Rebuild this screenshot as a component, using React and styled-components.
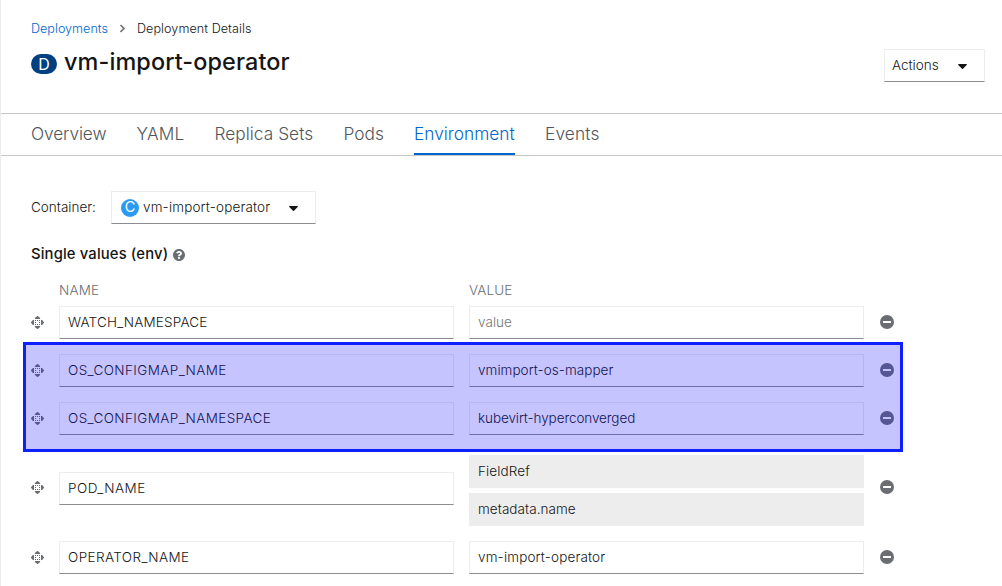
import React from 'react';
import styled, { createGlobalStyle } from 'styled-components';

const GlobalStyle = createGlobalStyle`
  *, *::before, *::after { box-sizing: border-box; }
  body {
    margin: 0;
    background: #fff;
    color: #151515;
    font-family: Inter, 'Liberation Sans', sans-serif;
    font-size: 13.5px;
    font-weight: 360;
    line-height: 21px;
    overflow: hidden;
  }
`;

const Page = styled.main`
  width: 1002px;
  height: 586px;
  overflow: hidden;
  border-left: 1px solid #ededed;
  background: #fff;
`;

const Text = styled.span`
  letter-spacing: ${(p) => p.$track || 0}px;
  white-space: nowrap;
`;

const Header = styled.header`
  height: 113px;
  padding: 18px 17px 0 30px;
`;

const Breadcrumb = styled.nav`
  display: flex;
  align-items: center;
  height: 21px;
  font-size: 12.6px;
`;

const Crumb = styled(Text)`
  color: ${(p) => (p.$link ? '#06c' : '#151515')};
  width: ${(p) => (p.$link ? '88px' : 'auto')};
`;

const Chevron = styled.svg`
  display: block;
  width: 7px;
  height: 9px;
  margin-right: 11px;
`;

const TitleRow = styled.div`
  display: flex;
  justify-content: space-between;
  align-items: flex-start;
  height: 43px;
  padding-top: 10px;
`;

const Title = styled.h1`
  display: flex;
  align-items: center;
  gap: 7px;
  height: 26px;
  margin: 0;
  font-size: 23.4px;
  font-weight: 450;
`;

const TitleText = styled(Text)`
  position: relative;
  top: -1px;
`;

const Badge = styled.span`
  display: flex;
  align-items: center;
  justify-content: center;
  flex: none;
  width: ${(p) => p.$width}px;
  height: ${(p) => p.$height}px;
  margin-top: ${(p) => p.$drop || 0}px;
  border-radius: 20px;
  background: ${(p) => p.$color};
  color: #fff;
  font-size: ${(p) => p.$size}px;
  font-weight: 400;
  line-height: 1;
`;

const Dropdown = styled.button`
  display: flex;
  align-items: center;
  flex: none;
  width: ${(p) => p.$width}px;
  height: 33px;
  margin: 0;
  padding: 0 17px 0 ${(p) => p.$inset}px;
  border: 1px solid #ededed;
  border-bottom-color: #8a8d90;
  border-radius: 0;
  background: #fff;
  color: #151515;
  font: inherit;
`;

const Caret = styled.svg`
  display: block;
  width: 9px;
  height: 5px;
  margin: 2px 0 0 auto;
`;

const Tabs = styled.nav`
  display: flex;
  height: 43px;
  padding-left: 30px;
  border-top: 1px solid #c7c7c7;
  border-bottom: 1px solid #c7c7c7;
  font-size: 17.3px;
`;

const Tab = styled.a`
  flex: none;
  width: ${(p) => p.$width}px;
  height: 41px;
  margin-right: 30px;
  padding-top: 9px;
  border-bottom: 2px solid ${(p) => (p.$active ? '#06c' : 'transparent')};
  color: ${(p) => (p.$active ? '#06c' : '#51565b')};
`;

const Body = styled.section`
  padding: 35px 0 0 30px;
`;

const ContainerRow = styled.div`
  display: flex;
  align-items: center;
  height: 33px;
`;

const ContainerLabel = styled(Text)`
  width: 80px;
`;

const ContainerName = styled(Text)`
  margin-left: 4px;
`;

const SectionTitle = styled.h2`
  display: flex;
  align-items: center;
  gap: 5px;
  height: 21px;
  margin: 20px 0 0;
  font-size: 14.8px;
  font-weight: 500;
`;

const Icon = styled.svg`
  display: block;
  flex: none;
`;

const HelpIcon = styled(Icon)`
  width: 12px;
  height: 12px;
  margin-top: 1px;
`;

const Editor = styled.div`
  position: relative;
  display: flex;
  flex-direction: column;
  gap: 15px;
  width: 872px;
  margin-top: 15px;
`;

const Row = styled.div`
  display: grid;
  grid-template-columns: 13px 395px 395px 14px;
  column-gap: 15px;
  align-items: center;
`;

const HeadRow = styled(Row)`
  height: 21px;
  margin-bottom: -10px;
  color: #6a6e73;
`;

const HeadCell = styled(Text)`
  grid-column: ${(p) => p.$column};
`;

const Field = styled.input`
  display: block;
  width: 100%;
  height: 33px;
  margin: 0;
  padding: 0 8px ${(p) => (p.$low ? 0 : 2)}px;
  border: 1px solid #ededed;
  border-bottom-color: ${(p) => (p.disabled ? '#ededed' : '#8a8d90')};
  border-radius: 0;
  outline: none;
  background: ${(p) => (p.disabled ? '#ededed' : '#fff')};
  color: #151515;
  font: inherit;
  letter-spacing: ${(p) => p.$track || 0}px;
  &::placeholder { color: #757575; opacity: 1; }
`;

const FieldStack = styled.div`
  display: flex;
  flex-direction: column;
  gap: 5px;
  padding-top: ${(p) => (p.$double ? 5 : 0)}px;
`;

const Highlight = styled.div`
  position: absolute;
  left: -8px;
  top: 62px;
  width: 880px;
  height: 110px;
  border: 3px solid #0f20ff;
  background: rgba(16, 12, 255, 0.245);
  background-clip: padding-box;
  pointer-events: none;
`;

const RemoveIcon = styled(Icon)`
  width: 14px;
  height: 14px;
  margin: 0 0 ${(p) => (p.$raised ? 3 : 1)}px 1px;
`;

const MoveIcon = styled(Icon)`
  width: 13px;
  height: 13px;
  margin-bottom: ${(p) => (p.$raised ? 2 : 0)}px;
`;

const Down = () => (
  <Caret viewBox="0 0 9 5"><path d="M.7 0h7.6c.6 0 .8.6.4 1L5 4.7c-.3.3-.7.3-1 0L.3 1C-.1.6.1 0 .7 0Z" fill="#151515" /></Caret>
);

const Move = ({ raised }) => (
  <MoveIcon viewBox="0 0 13 13" fill="#6a6e73" $raised={raised}>
    <path d="M6.2 0h.6L9.100 1.900V3H3.900V1.900Z M6.200 13h.6l2.300-1.900V10H3.900v1.100Z M0 6.200v.6L1.900 9.100H3V3.900H1.900Z M13 6.200v.6l-1.900 2.300H10V3.900h1.100Z" />
    <path d="M4 4h1v1H4z M6 4h1v1H6z M8 4h1v1H8z M4 6h1v1H4z M8 6h1v1H8z M4 8h1v1H4z M6 8h1v1H6z M8 8h1v1H8z" />
  </MoveIcon>
);

const Remove = ({ raised }) => (
  <RemoveIcon viewBox="0 0 14 14" $raised={raised}>
    <circle cx="7" cy="7" r="7" fill="#6a6e73" />
    <rect x="3" y="6" width="8" height="2" rx=".3" fill="#fff" />
  </RemoveIcon>
);

const tabs = [
  { name: 'Overview', width: 75.5, track: -0.12 },
  { name: 'YAML', width: 48, track: 0.2 },
  { name: 'Replica Sets', width: 99, track: 0.03 },
  { name: 'Pods', width: 40.5, track: 0 },
  { name: 'Environment', width: 101, track: 0, active: true },
  { name: 'Events', width: 55, track: 0.15 },
];

const env = [
  { name: 'WATCH_NAMESPACE', track: 0.18, values: [{ text: '', track: 0.05 }] },
  { name: 'OS_CONFIGMAP_NAME', track: 0.4, values: [{ text: 'vmimport-os-mapper', track: 0.05 }] },
  { name: 'OS_CONFIGMAP_NAMESPACE', track: 0.4, values: [{ text: 'kubevirt-hyperconverged', track: -0.09 }] },
  { name: 'POD_NAME', track: 0.48, values: [{ text: 'FieldRef', track: 0.12 }, { text: 'metadata.name', track: 0.06 }] },
  { name: 'OPERATOR_NAME', track: 0.4, values: [{ text: 'vm-import-operator', track: 0.16 }] },
];

const EnvRow = ({ item }) => {
  const isRef = item.values.length > 1;
  return (
    <Row>
      <Move raised={isRef} />
      <Field defaultValue={item.name} $track={item.track} $low={isRef} />
      <FieldStack $double={isRef}>
        {item.values.map((v) => (
          <Field key={v.text} defaultValue={v.text} placeholder="value" disabled={isRef} $track={v.track} />
        ))}
      </FieldStack>
      <Remove raised={isRef} />
    </Row>
  );
};

export default function App() {
  return (
    <Page>
      <GlobalStyle />
      <Header>
        <Breadcrumb>
          <Crumb $link>Deployments</Crumb>
          <Chevron viewBox="0 0 7 9"><path d="m1.5 1 3.5 3.5L1.5 8" fill="none" stroke="#6a6e73" strokeWidth="1.6" /></Chevron>
          <Crumb $track={0.05}>Deployment Details</Crumb>
        </Breadcrumb>
        <TitleRow>
          <Title>
            <Badge $width={26} $height={20} $drop={4} $size={16} $color="#004080">D</Badge>
            <TitleText $track={0.12}>vm-import-operator</TitleText>
          </Title>
          <Dropdown $width={101} $inset={7}>
            <Text>Actions</Text>
            <Down />
          </Dropdown>
        </TitleRow>
      </Header>
      <Tabs>
        {tabs.map((t) => (
          <Tab key={t.name} $width={t.width} $active={t.active}><Text $track={t.track}>{t.name}</Text></Tab>
        ))}
      </Tabs>
      <Body>
        <ContainerRow>
          <ContainerLabel>Container:</ContainerLabel>
          <Dropdown $width={205} $inset={9}>
            <Badge $width={18} $height={18} $size={14.5} $color="#2b9af3">C</Badge>
            <ContainerName $track={0.16}>vm-import-operator</ContainerName>
            <Down />
          </Dropdown>
        </ContainerRow>
        <SectionTitle>
          <Text $track={0.15}>Single values (env)</Text>
          <HelpIcon viewBox="8 8 496 496" fill="#6a6e73">
            <path d="M504 256c0 137-111 248-248 248S8 393 8 256 119 8 256 8s248 111 248 248zM262.700 90c-54.500 0-89.300 23-116.500 63.800-3.500 5.300-2.400 12.400 2.700 16.300l34.700 26.300c5.200 3.900 12.600 3 16.700-2.100 17.900-22.700 30.100-35.800 57.300-35.800 20.400 0 45.700 13.100 45.700 33 0 15-12.400 22.700-32.500 34C247.100 238.500 216 255 216 296v4c0 6.600 5.400 12 12 12h56c6.600 0 12-5.400 12-12v-1.300c0-28.500 83.200-29.600 83.200-106.700 0-58-60.200-102-116.500-102zM256 338c-25.400 0-46 20.600-46 46s20.600 46 46 46 46-20.600 46-46-20.600-46-46-46z" />
          </HelpIcon>
        </SectionTitle>
        <Editor>
          <HeadRow>
            <HeadCell $column={2} $track={0.2}>NAME</HeadCell>
            <HeadCell $column={3} $track={0.1}>VALUE</HeadCell>
          </HeadRow>
          {env.map((item) => <EnvRow key={item.name} item={item} />)}
          <Highlight />
        </Editor>
      </Body>
    </Page>
  );
}
